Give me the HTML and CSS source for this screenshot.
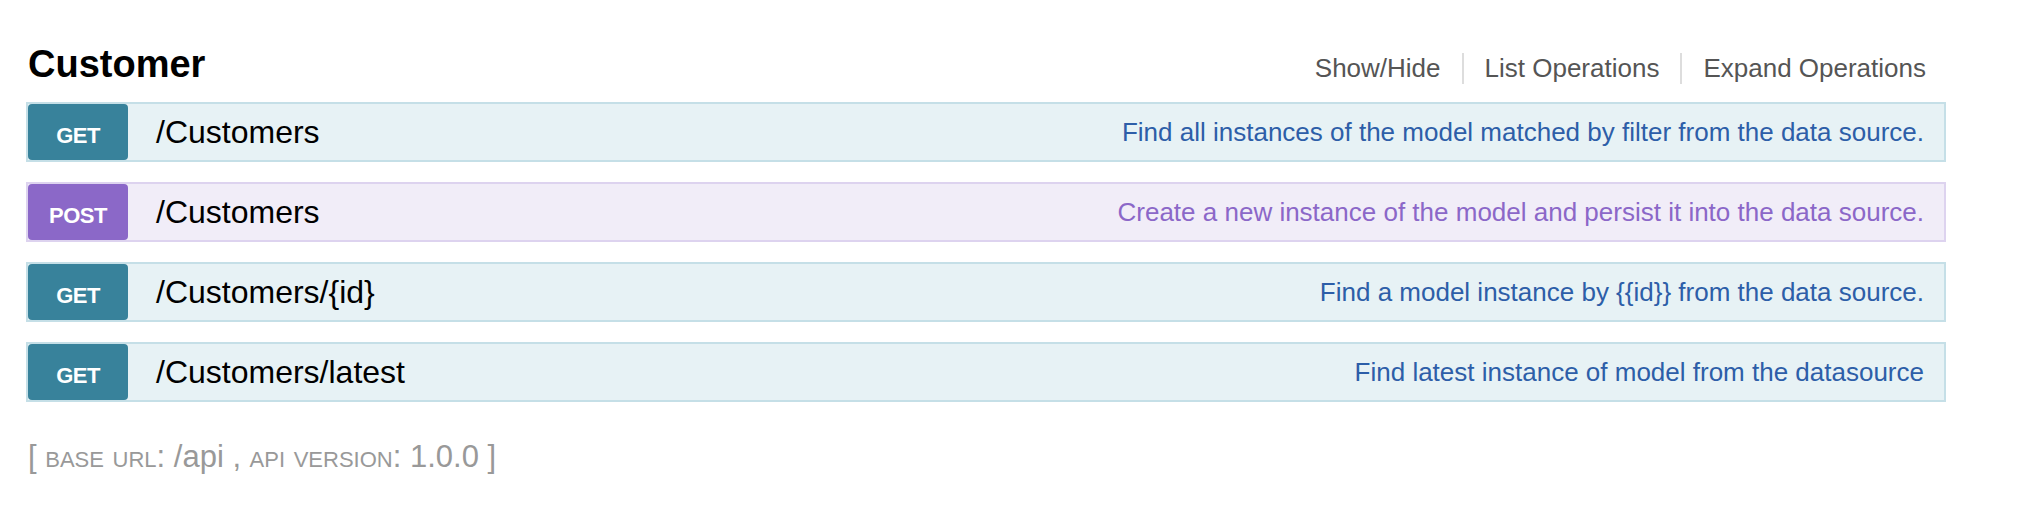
FILE: index.html
```html
<!DOCTYPE html>
<html lang="en">
<head>
<meta charset="utf-8">
<title>Customer</title>
<link rel="stylesheet" href="styles.css">
</head>
<body>
<div class="wrap">
  <section class="resource">
    <div class="resource-head">
      <h2 class="resource-title">Customer</h2>
      <ul class="options">
        <li><a href="#">Show/Hide</a></li>
        <li><a href="#">List Operations</a></li>
        <li><a href="#">Expand Operations</a></li>
      </ul>
    </div>
    <ul class="operations">
      <li class="op op-get">
        <span class="method">GET</span>
        <span class="path">/Customers</span>
        <span class="desc">Find all instances of the model matched by filter from the data source.</span>
      </li>
      <li class="op op-post">
        <span class="method">POST</span>
        <span class="path">/Customers</span>
        <span class="desc">Create a new instance of the model and persist it into the data source.</span>
      </li>
      <li class="op op-get">
        <span class="method">GET</span>
        <span class="path">/Customers/{id}</span>
        <span class="desc">Find a model instance by {{id}} from the data source.</span>
      </li>
      <li class="op op-get">
        <span class="method">GET</span>
        <span class="path">/Customers/latest</span>
        <span class="desc">Find latest instance of model from the datasource</span>
      </li>
    </ul>
  </section>
  <p class="footer">[ <span class="label">base url</span>: /api , <span class="label">api version</span>: 1.0.0 ]</p>
</div>
</body>
</html>
```

FILE: styles.css
```css
* {
  box-sizing: border-box;
}

body {
  margin: 0;
  background: #ffffff;
  font-family: "Liberation Sans", Arial, Helvetica, sans-serif;
  color: #000;
}

.wrap {
  padding-left: 26px;
  width: 1946px;
}

.resource-head {
  display: flex;
  justify-content: space-between;
  align-items: baseline;
  height: 102px;
  padding-top: 42px;
}

.resource-title {
  margin: 0;
  padding-left: 2px;
  font-size: 38px;
  line-height: 44px;
  font-weight: bold;
  color: #000;
}

.options {
  display: flex;
  margin: 0 -1px 0 0;
  padding: 0;
  list-style: none;
}

.options li {
  padding: 0 21px;
  font-size: 26px;
  line-height: 31px;
}

.options li + li {
  border-left: 2px solid #dddddd;
}

.options a {
  color: #555555;
  text-decoration: none;
}

.operations {
  display: flex;
  flex-direction: column;
  gap: 20px;
  margin: 0;
  padding: 0;
  list-style: none;
}

.op {
  display: flex;
  align-items: center;
  height: 60px;
  border: 2px solid;
}

.op-get {
  background: #e7f2f5;
  border-color: #c5dfe7;
}

.op-post {
  background: #f1edf8;
  border-color: #ddd3ef;
}

.method {
  flex: none;
  width: 100px;
  height: 56px;
  padding-top: 8px;
  border-radius: 4px;
  color: #ffffff;
  font-size: 22px;
  font-weight: bold;
  line-height: 48px;
  letter-spacing: -0.5px;
  text-align: center;
}

.op-get .method {
  background: #38829b;
}

.op-post .method {
  background: #8b68c8;
}

.path {
  margin-left: 28px;
  font-size: 32px;
  color: #000;
}

.desc {
  margin-left: auto;
  padding-right: 20px;
  font-size: 26px;
}

.op-get .desc {
  color: #2d5ea8;
}

.op-post .desc {
  color: #8b67c8;
}

.footer {
  margin: 37px 0 0 2px;
  font-size: 31px;
  line-height: 36px;
  color: #999999;
}

.footer .label {
  font-variant: small-caps;
}
```
